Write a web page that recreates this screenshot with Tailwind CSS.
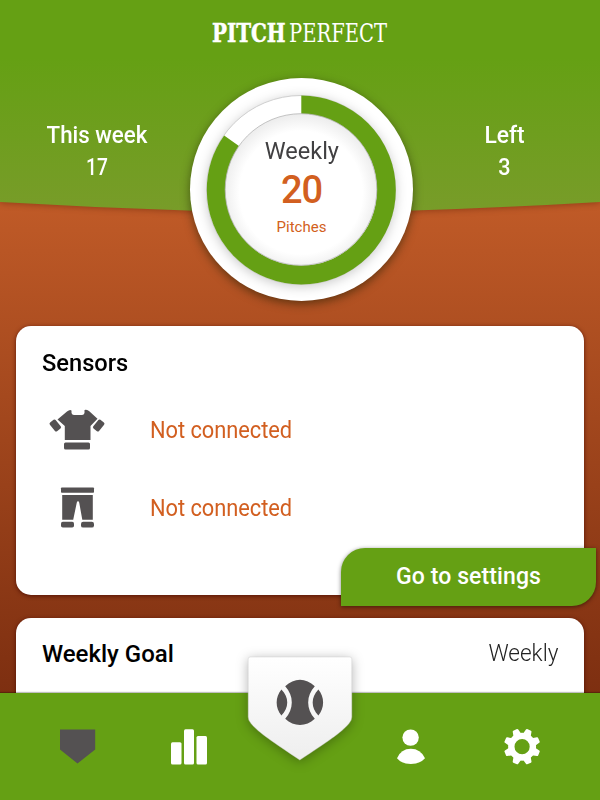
<!DOCTYPE html>
<html lang="en">
<head>
<meta charset="utf-8">
<title>PitchPerfect</title>
<script src="https://cdn.jsdelivr.net/npm/@tailwindcss/browser@4"></script>
</head>
<body class="w-[600px] h-[800px] overflow-hidden font-['Roboto','Liberation_Sans',sans-serif]">
<div class="relative isolate w-[600px] h-[800px] overflow-hidden flex flex-col bg-linear-to-b from-[#bf5a27] from-[26%] to-[#7c2e10] to-[88%]">
  <!-- field backdrop -->
  <svg class="absolute inset-0 -z-10" width="600" height="240" viewBox="0 0 600 240">
    <defs><linearGradient id="grass" x1="0" y1="0" x2="0" y2="1"><stop offset=".28" stop-color="#65a014"/><stop offset="1" stop-color="#789c29"/></linearGradient></defs>
    <path class="drop-shadow-[0_1px_3px_rgba(80,20,0,0.4)]" d="M0 0H600V202Q500 208 400 211H200Q100 208 0 202Z" fill="url(#grass)"/>
  </svg>

  <header class="h-[60px] flex justify-center pt-[14px]">
    <svg width="200" height="36" viewBox="0 0 200 36" font-family="'DejaVu Serif Condensed','DejaVu Serif',serif" font-size="26" fill="#fff">
      <text transform="translate(12 28) scale(.85 1)" font-weight="700" stroke="#fff" stroke-width=".5">PITCH</text>
      <text transform="translate(89 28) scale(.836 1)">PERFECT</text>
    </svg>
  </header>

  <section class="h-[265px] flex">
    <div class="w-[190px] pt-[59px] pl-1 text-center text-white font-medium text-2xl leading-8">
      <div class="scale-x-[0.93]">This week</div><div class="scale-x-[0.8]">17</div>
    </div>
    <div class="relative mt-[18px] size-[223px] rounded-full bg-white shadow-[0_3px_10px_rgba(30,30,0,0.55)]">
      <svg class="absolute inset-0" width="223" height="223" viewBox="0 0 223 223">
        <circle class="drop-shadow-[0_2px_6px_rgba(0,0,0,0.22)]" cx="111" cy="112" r="94.5" fill="#fff"/>
        <circle cx="111" cy="112" r="94.5" fill="#fff" stroke="#bbb" stroke-width=".7"/>
        <circle cx="111.3" cy="112" r="85" fill="none" stroke="#65a014" stroke-width="19" pathLength="100" stroke-dasharray="84.8 15.2" transform="rotate(-90 111.3 112)"/>
        <defs><radialGradient id="dial" cx=".5" cy=".52" r=".52"><stop offset=".78" stop-color="#fff"/><stop offset="1" stop-color="#ececec"/></radialGradient></defs>
        <circle cx="111" cy="111.5" r="75.8" fill="url(#dial)" stroke="#b5b5b5" stroke-width=".8"/>
      </svg>
      <div class="relative flex flex-col items-center text-[#d25f20]">
        <div class="mt-[57px] text-2xl leading-8 text-[#414042] scale-x-[0.98]">Weekly</div>
        <div class="mt-[1px] text-[38px] leading-[44px] font-medium -tracking-[1px]">20</div>
        <div class="mt-[5px] text-[15px] leading-5">Pitches</div>
      </div>
    </div>
    <div class="flex-1 pt-[59px] pr-1 text-center text-white font-medium text-2xl leading-8">
      <div class="scale-x-[0.95]">Left</div><div class="scale-x-[0.9]">3</div>
    </div>
  </section>

  <main class="flex flex-col gap-[23px] px-4">
    <section class="relative w-[568px] h-[269px] mt-[1px] rounded-[15px] bg-white shadow-[0_1px_4px_rgba(70,10,0,0.8)] pl-[26px] pt-[21px]">
      <h2 class="text-2xl leading-8 font-medium text-black origin-left scale-x-[0.985]">Sensors</h2>
      <div class="mt-[11px] flex flex-col text-[#d25f20] text-[23px]">
        <div class="h-[78px] flex items-center">
          <svg class="w-[108px] shrink-0" width="108" height="60" viewBox="0 0 108 60" fill="#545152">
            <path d="M25 12.5Q28 10 29.5 11.5V14Q30 16 32 16H40Q42 16 42.5 14V11Q44 10 47 12L55.5 19.8L48.5 27V41H22.8V27L15.5 20.5Z"/>
            <rect x="22" y="43.5" width="26" height="7" rx="1.5"/>
            <rect x="9.6" y="21" width="7.4" height="11" rx="1.5" transform="rotate(-39 13.3 26.5)"/>
            <rect x="53" y="21" width="7.4" height="11" rx="1.5" transform="rotate(39 56.7 26.5)"/>
          </svg>
          <span class="relative top-0.5 inline-block origin-left scale-x-[0.95] -tracking-[0.05px]">Not connected</span>
        </div>
        <div class="h-[78px] flex items-center">
          <svg class="w-[108px] shrink-0" width="108" height="60" viewBox="0 0 108 60" fill="#545152">
            <rect x="19" y="10.5" width="33" height="5.2" rx=".8"/>
            <path d="M20.2 18H50.8V42.8H40.3L37.2 25.5Q36 22.5 34.8 25.5L31.2 42.8H20.2Z"/>
            <rect x="19" y="44.8" width="13" height="5.8" rx="1.8"/>
            <rect x="39" y="44.8" width="13" height="5.8" rx="2.2"/>
          </svg>
          <span class="relative top-0.5 inline-block origin-left scale-x-[0.95] -tracking-[0.05px]">Not connected</span>
        </div>
      </div>
      <button class="absolute left-[325px] top-[222px] w-[255px] h-[58px] rounded-tl-[24px] rounded-br-[24px] bg-[#65a014] text-white text-[23px] font-medium tracking-[0.1px] shadow-[0_1px_4px_rgba(0,0,0,0.5)]">Go to settings</button>
    </section>
    <section class="w-[568px] h-[100px] rounded-[15px] bg-white shadow-[0_1px_4px_rgba(70,10,0,0.8)] px-[26px] pt-[20px] flex justify-between text-2xl leading-8">
      <h2 class="font-medium text-black">Weekly Goal</h2>
      <span class="font-light text-[#222] text-[23px] origin-right scale-x-[0.98]">Weekly</span>
    </section>
  </main>

  <nav class="absolute left-0 bottom-0 w-[600px] h-[107px] bg-[#65a014] shadow-[0_-1px_1px_rgba(0,0,0,0.25)] flex items-center pl-[22px]">
    <svg width="111" height="60" viewBox="0 0 111 60"><path d="M38 12.5H73.2V32.5L55.5 46.5L38 32.5Z" fill="#545152"/></svg>
    <svg width="111" height="60" viewBox="0 0 111 60" fill="#fff"><rect x="38" y="25.3" width="10.5" height="22.3" rx="1.5"/><rect x="51" y="12.3" width="10" height="35.3" rx="1.5"/><rect x="63.5" y="18.9" width="10.5" height="28.7" rx="1.5"/></svg>
    <svg class="relative -top-[33px] overflow-visible" width="111" height="120" viewBox="0 0 111 120">
      <defs><linearGradient id="plate" x1="0" y1="0" x2="0" y2="1"><stop stop-color="#fff"/><stop offset="1" stop-color="#eee"/></linearGradient></defs>
      <path class="drop-shadow-[0_2px_6px_rgba(0,0,0,0.3)]" d="M6.2 3Q4.2 3 4.2 5V63Q4.2 66.5 7 69.5C15 79 29 88 55.8 106C83 88 97 79 105 69.5Q107.8 66.5 107.8 63V5Q107.8 3 105.8 3Z" fill="url(#plate)" stroke="#c7c7c7" stroke-width=".4"/>
      <path d="M41.2 32.3C50 23.6 62 23.6 70.8 32.3C62 41.5 62 55.5 70.8 64.7C62 73 50 73 41.2 64.7C50 55.5 50 41.5 41.2 32.3Z" fill="#545152"/>
      <path d="M37.4 35.5C31.1 43 31.1 54 37.4 61.5C45.2 54 45.2 43 37.4 35.5ZM74.4 35.5C80.7 43 80.7 54 74.4 61.5C66.8 54 66.8 43 74.4 35.5Z" fill="#545152"/>
    </svg>
    <svg width="111" height="60" viewBox="0 0 111 60" fill="#fff"><circle cx="55.6" cy="20.6" r="8.2"/><path d="M42 41.3Q46 31.8 55.8 31.8T70 41.3Q65 47 55.8 47T42 41.3Z"/></svg>
    <svg width="111" height="60" viewBox="0 0 111 60">
      <g transform="translate(56.1 29.7)">
        <g id="gear" fill="#fff"></g>
        <circle r="10.8" fill="none" stroke="#fff" stroke-width="6.4"/>
      </g>
    </svg>
  </nav>
</div>
<script>
// Eight teeth, evenly spaced and offset so the gear has a gap at the top.
const gear = document.getElementById('gear');
for (let i = 0; i < 8; i++) {
  const p = document.createElementNS('http://www.w3.org/2000/svg', 'path');
  p.setAttribute('d', 'M-4.2 -12L-3 -17.3Q-2.8 -18.2 -2 -18.2H2Q2.8 -18.2 3 -17.3L4.2 -12Z');
  p.setAttribute('transform', `rotate(${22.5 + i * 45})`);
  gear.appendChild(p);
}
</script>
</body>
</html>
